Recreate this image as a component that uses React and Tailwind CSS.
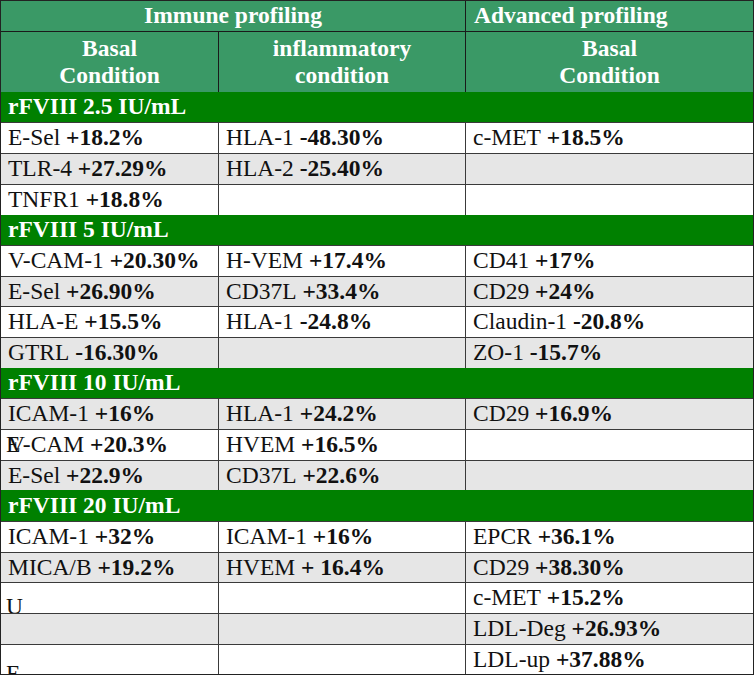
const groups = [
    {
        title: "rFVIII 2.5 IU/mL",
        rows: [
            { bg: "white", h: 31, cells: [["E-Sel", "+18.2%"], ["HLA-1", "-48.30%"], ["c-MET", "+18.5%"]] },
            { bg: "gray", h: 31, cells: [["TLR-4", "+27.29%"], ["HLA-2", "-25.40%"], null] },
            { bg: "white", h: 31, cells: [["TNFR1", "+18.8%"], null, null] },
        ],
    },
    {
        title: "rFVIII 5 IU/mL",
        rows: [
            { bg: "white", h: 31, cells: [["V-CAM-1", "+20.30%"], ["H-VEM", "+17.4%"], ["CD41", "+17%"]] },
            { bg: "gray", h: 30, cells: [["E-Sel", "+26.90%"], ["CD37L", "+33.4%"], ["CD29", "+24%"]] },
            { bg: "white", h: 31, cells: [["HLA-E", "+15.5%"], ["HLA-1", "-24.8%"], ["Claudin-1", "-20.8%"]] },
            { bg: "gray", h: 31, cells: [["GTRL", "-16.30%"], null, ["ZO-1", "-15.7%"]] },
        ],
    },
    {
        title: "rFVIII 10 IU/mL",
        rows: [
            { bg: "gray", h: 31, cells: [["ICAM-1", "+16%"], ["HLA-1", "+24.2%"], ["CD29", "+16.9%"]] },
            { bg: "white", h: 31, cells: [["V-CAM", "+20.3%", "overlap"], ["HVEM", "+16.5%"], null] },
            { bg: "gray", h: 30, cells: [["E-Sel", "+22.9%"], ["CD37L", "+22.6%"], null] },
        ],
    },
    {
        title: "rFVIII 20 IU/mL",
        rows: [
            { bg: "white", h: 31, cells: [["ICAM-1", "+32%"], ["ICAM-1", "+16%"], ["EPCR", "+36.1%"]] },
            { bg: "gray", h: 30, cells: [["MICA/B", "+19.2%"], ["HVEM", "+ 16.4%"], ["CD29", "+38.30%"]] },
            { bg: "white", h: 31, cells: [["U", "", "low"], null, ["c-MET", "+15.2%"]] },
            { bg: "gray", h: 31, cells: [null, null, ["LDL-Deg", "+26.93%"]] },
            { bg: "white", h: 30, cells: [["E", "", "lower"], null, ["LDL-up", "+37.88%"]] },
        ],
    },
];

const groupHeights = [30, 30, 30, 31];

function Cell({ cell, width, last }) {
    const border = last ? "" : "border-r border-[#3a3a3a]";
    if (!cell) return <div className={`${width} ${border} h-full`} />;
    const [label, value, quirk] = cell;

    if (quirk === "low" || quirk === "lower") {
        return (
            <div className={`${width} ${border} h-full relative overflow-hidden`}>
                <span className={`absolute left-[5px] leading-none ${quirk === "low" ? "top-[12px]" : "top-[17px]"}`}>{label}</span>
            </div>
        );
    }

    return (
        <div className={`${width} ${border} h-full flex items-center pl-[7px] whitespace-nowrap`}>
            {quirk === "overlap" ? (
                <span className="relative">
                    <span className="absolute left-[-2px] top-0">E</span>
                    {label}
                </span>
            ) : label}
            {value ? <span className="font-bold">&nbsp;{value}</span> : null}
        </div>
    );
}

export default function App() {
    const widths = ["w-[218px]", "w-[247px]", "w-[287px]"];
    return (
        <div className="bg-white w-[755px] h-[683px] font-serif">
            <div className="w-[754px] border border-[#222] [font-family:Liberation_Serif,Times_New_Roman,serif] text-[23.5px] text-[#111]">
                <div className="flex h-[31px] bg-[#3a9966] text-white font-bold border-b border-[#1a1a1a]">
                    <div className="w-[465px] border-r border-[#1a1a1a] flex items-center justify-center">Immune profiling</div>
                    <div className="flex-1 flex items-center pl-[8px]">Advanced profiling</div>
                </div>
                <div className="flex h-[60px] bg-[#3a9966] text-white font-bold leading-[27px]">
                    <div className="w-[218px] border-r border-[#1a1a1a] flex items-center justify-center text-center">Basal<br />Condition</div>
                    <div className="w-[247px] border-r border-[#1a1a1a] flex items-center justify-center text-center">inflammatory<br />condition</div>
                    <div className="flex-1 flex items-center justify-center text-center">Basal<br />Condition</div>
                </div>
                {groups.map((group, gi) => (
                    <div key={group.title}>
                        <div style={{ height: groupHeights[gi] }} className="bg-[#008000] text-white font-bold flex items-center pl-[7px]">
                            {group.title}
                        </div>
                        {group.rows.map((row, ri) => (
                            <div
                                key={ri}
                                style={{ height: row.h }}
                                className={`flex border-t border-[#3a3a3a] ${row.bg === "gray" ? "bg-[#e6e6e6]" : "bg-white"}`}
                            >
                                {row.cells.map((cell, ci) => (
                                    <Cell key={ci} cell={cell} width={ci === 2 ? "flex-1" : widths[ci]} last={ci === 2} />
                                ))}
                            </div>
                        ))}
                    </div>
                ))}
            </div>
        </div>
    );
}
